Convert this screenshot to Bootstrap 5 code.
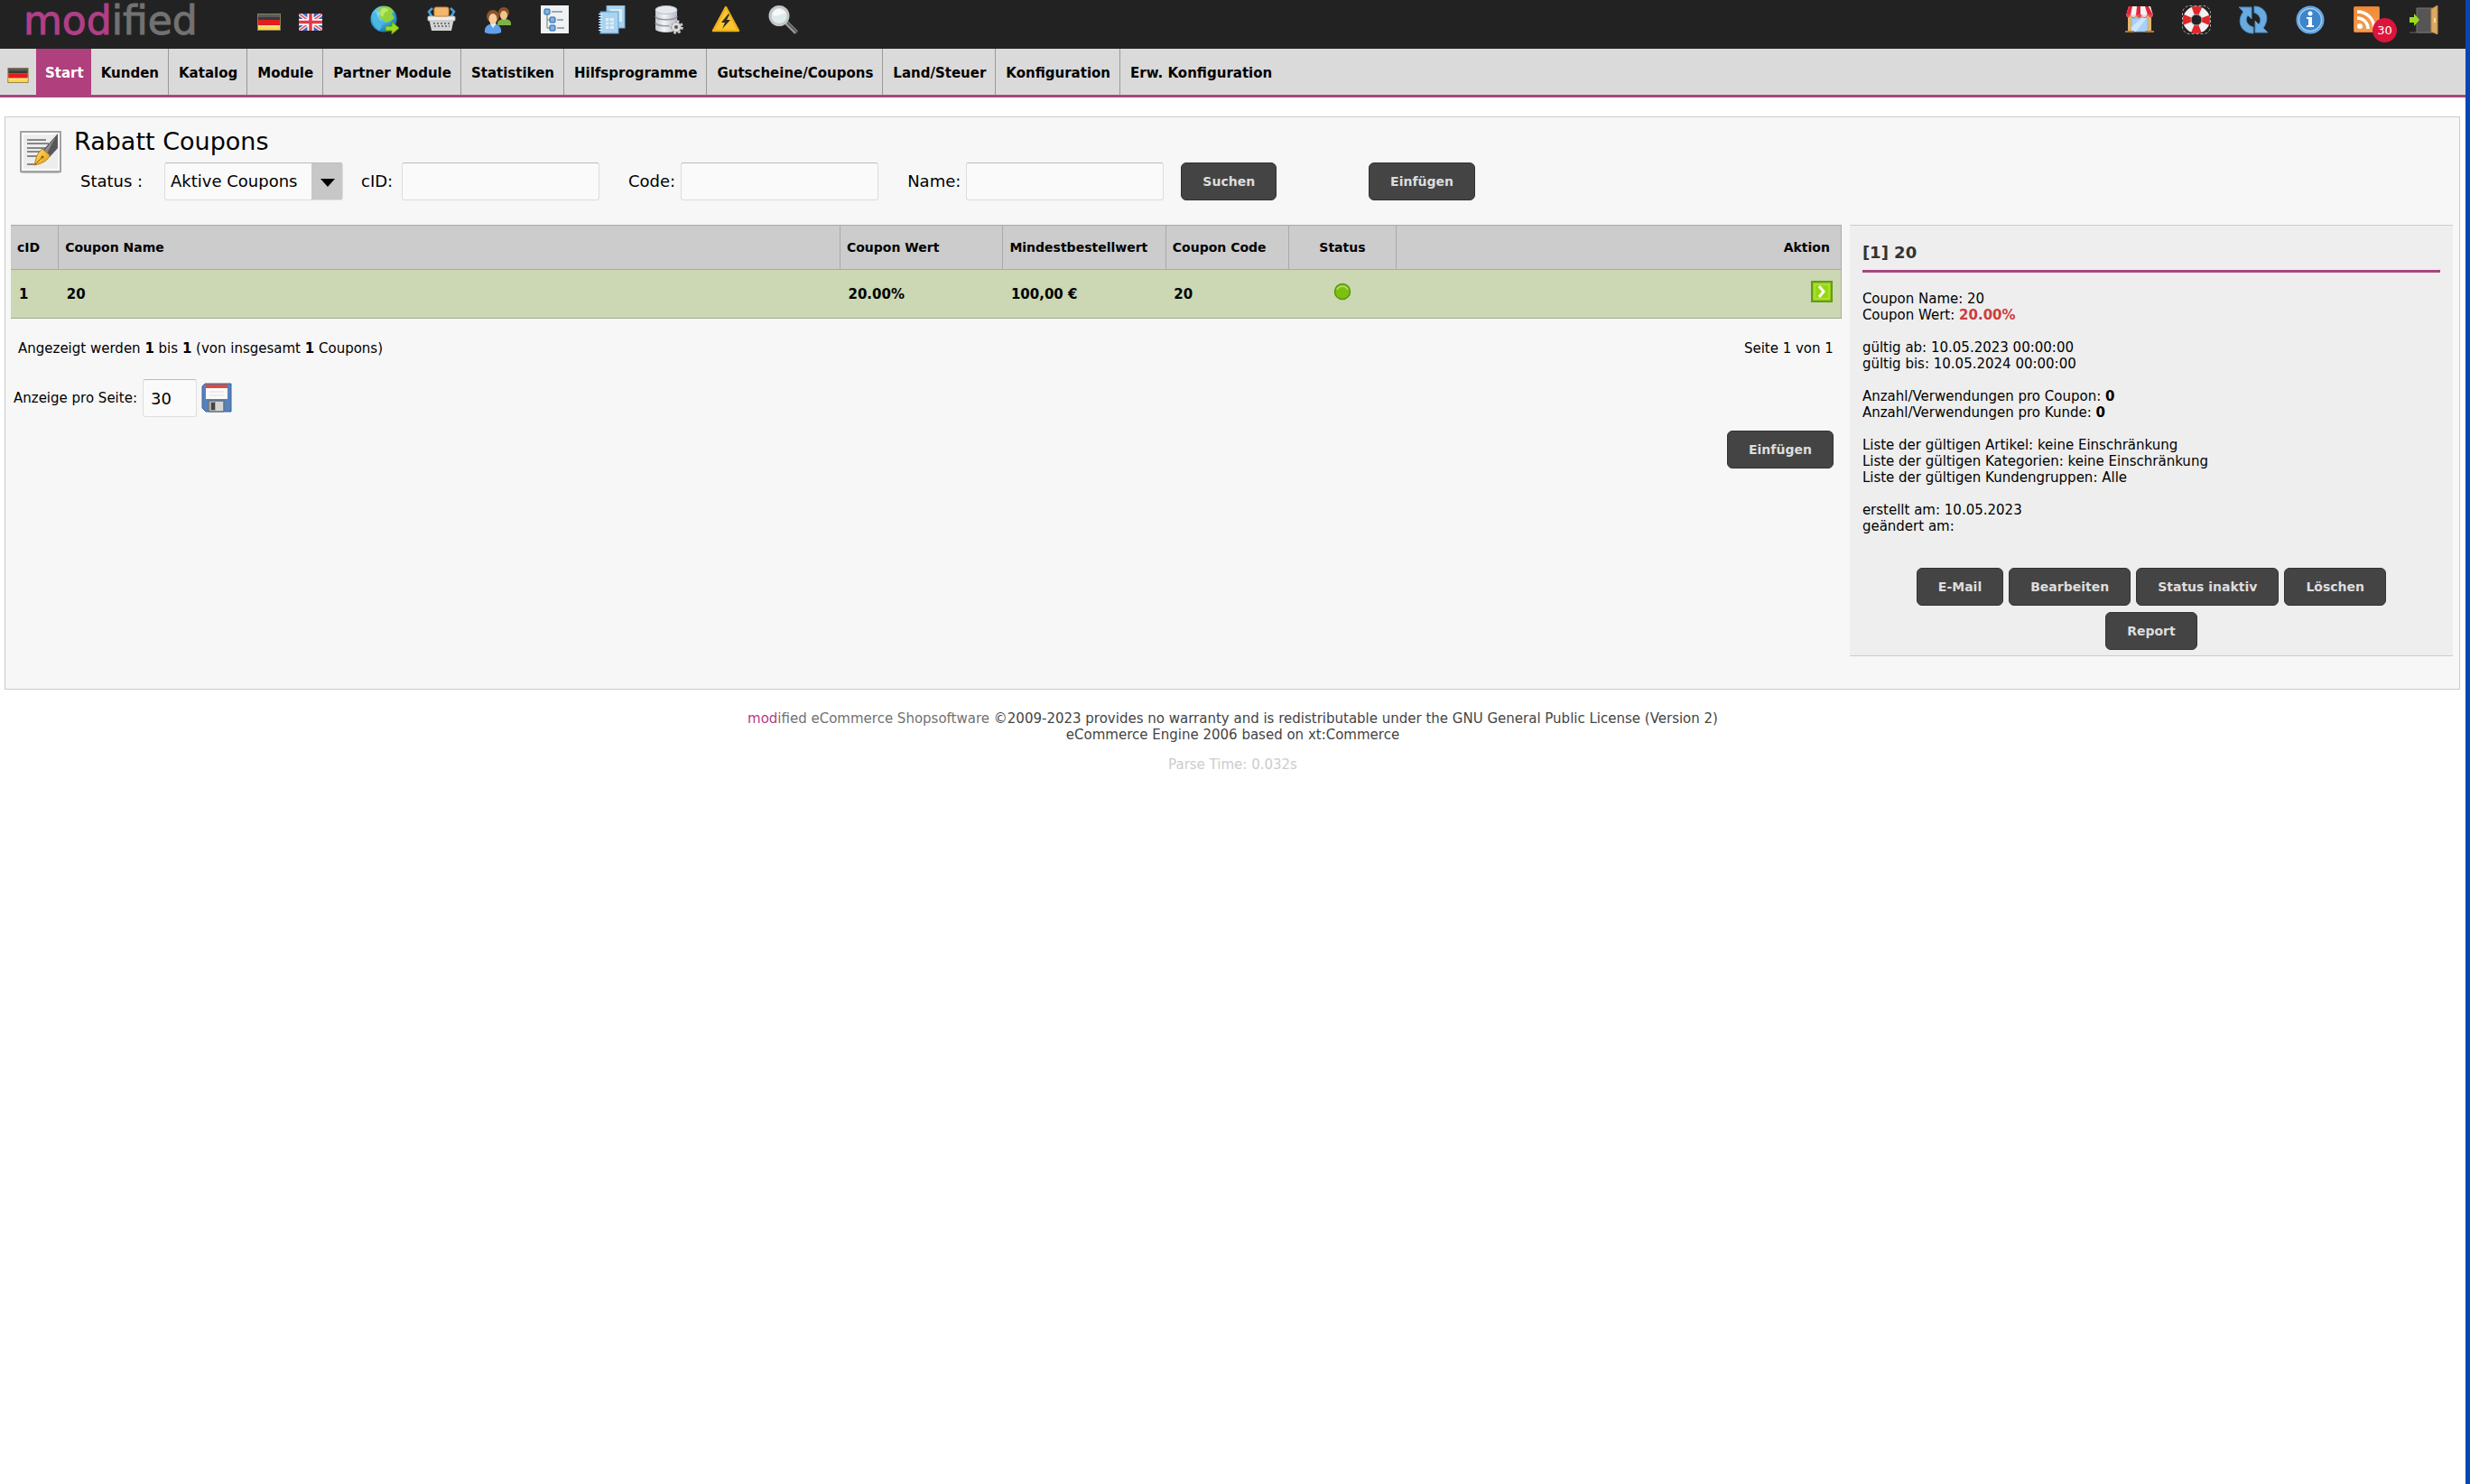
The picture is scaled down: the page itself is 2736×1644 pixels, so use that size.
<!DOCTYPE html>
<html lang="de">
<head>
<meta charset="utf-8">
<meta name="viewport" content="width=device-width, initial-scale=1">
<title>Rabatt Coupons</title>
<link href="https://cdn.jsdelivr.net/npm/bootstrap@5.3.0/dist/css/bootstrap.min.css" rel="stylesheet">
<style>
:root { --brand: #a8467f; --line: #c4c4c4; }
body { font-family: "DejaVu Sans", Verdana, sans-serif; font-size: 15px; line-height: 18px; color: #000; background: #fff; }
.shell { border-right: 5px solid #0a46b2; }
.topbar { background: #222; height: 54px; padding: 0 30px 0 26px; }
.topbar svg { display: block; }
.logo { width: 259px; font-size: 44px; line-height: 46px; color: #727272; text-decoration: none; -webkit-text-stroke: 1px currentColor; }
.logo b { color: #b03f86; font-weight: 400; }
.ico-row { gap: 31px; padding-top: 6px; }
.flags { gap: 20px; padding-top: 15px; width: 125px; }
.feed-count { position: absolute; left: 22px; top: 14px; width: 27px; height: 27px; border-radius: 50%; background: #dc143c; color: #fff; text-align: center; line-height: 27px; font-size: 13px; }
.mainmenu { background: #dadada; border-bottom: 3px solid var(--brand); min-height: 54px; }
.mainmenu .nav-link { padding: 3px 10px 0 11px; line-height: 48px; font-weight: 700; color: #000; border-right: 1px solid #999; border-radius: 0; }
.mainmenu .nav-item:last-child .nav-link { border-right: 0; }
.mainmenu .nav-link.active { background: #b03f7d; color: #fff; padding: 3px 8px 0 10px; border-right: 0; }
.menu-flag { width: 40px; padding: 21px 0 0 8px; line-height: 0; }
.panel { margin: 21px 6px 0 5px; background: #f7f7f7; border: 1px solid #ccc; padding: 0 7px 36px 6px; }
.panel-head { padding: 10px 0 27px 10px; }
.panel-icon { padding: 5px 0 0; margin-right: 14px; }
.panel-title { font-size: 27px; line-height: 34px; margin: 0 0 6px; font-weight: 400; }
.filter { padding-left: 7px; font-size: 18px; }
.filter label { padding-right: 6px; }
.l-status { width: 93px; } .l-cid { width: 45px; }
.field { height: 42px; padding: 0 8px; background-color: #fafafa; border: 1px solid #ddd; border-top-color: #bbb; border-radius: 3px; font-size: 18px; color: #000; }
.field-text { width: 219px; }
.field-select { width: 198px; padding: 0 6px; appearance: none; margin-right: 20px;
  background-image: url("data:image/svg+xml,%3Csvg xmlns='http://www.w3.org/2000/svg' width='34' height='42'%3E%3Crect width='34' height='42' fill='%23c7c7c7'/%3E%3Cpath d='M10 18h16l-8 9z'/%3E%3C/svg%3E");
  background-repeat: no-repeat; background-position: right center; }
.field-count { width: 60px; margin: 0 5px 0 6px; }
.btn-dark2 { --bs-btn-bg: #444; --bs-btn-color: #ddd; --bs-btn-border-color: #333; --bs-btn-hover-bg: #555; --bs-btn-hover-color: #fff; --bs-btn-font-weight: 700; --bs-btn-font-size: 14px; --bs-btn-line-height: 18px; --bs-btn-padding-x: 23px; --bs-btn-padding-y: 11px; --bs-btn-border-radius: 6px; }
.search-btn { margin-left: 19px; }
.insert-btn { margin-left: 102px; }
.main-col { flex: 1 1 0; min-width: 0; }
.side-col { flex: 0 0 24.7%; background: #eee; border: solid #ccc; border-width: 1px 0; margin-left: 9px; padding: 0 14px 6px 14px; }
.grid { width: 100%; table-layout: fixed; border-collapse: collapse; font-weight: 700; border-right: 1px solid #aaa; }
.grid th { background: #ccc; border: solid #aaa; border-width: 1px 1px 1px 0; height: 49px; padding: 0 7px; font-size: 14px; }
.grid td { background: #ccd7b3; border-bottom: 1px solid #a3ab93; height: 54px; padding: 0 9px; }
.grid th:last-child { padding-right: 12px; }
.grid svg { display: inline-block; vertical-align: middle; margin-bottom: 6px; }
.pager { padding: 24px 9px 25px 8px; }
.perpage { padding-left: 3px; }
.insert-row { padding: 15px 9px 0 0; }
.side-title { font-size: 18px; line-height: 22px; font-weight: 700; color: #333; padding: 19px 0 8px; margin: 0 0 20px; border-bottom: 3px solid var(--brand); }
.side-col p { margin: 0 0 18px; }
.price { color: #cd3c3c; }
.actions { gap: 7px 6px; padding: 19px 30px 0; }
.foot { color: #444; padding-top: 23px; }
.foot a { color: #727272; text-decoration: none; } .foot a span { color: #b03f86; }
.parse { color: #ccc; margin-top: 15px; }
</style>
</head>
<body>
<svg width="0" height="0" class="position-absolute" aria-hidden="true">
  <defs>
    <linearGradient id="gGrey" x1="0" y1="0" x2="1" y2="0"><stop offset="0" stop-color="#c3c8ce"/><stop offset=".4" stop-color="#f3f5f7"/><stop offset="1" stop-color="#b3b9c2"/></linearGradient>
    <radialGradient id="gGlobe" cx=".4" cy=".3" r=".8"><stop offset="0" stop-color="#9ce4fb"/><stop offset=".6" stop-color="#2ba0dc"/><stop offset="1" stop-color="#1668ac"/></radialGradient>
    <linearGradient id="gGold" x1="0" y1="0" x2="1" y2="1"><stop offset="0" stop-color="#ffdf6b"/><stop offset="1" stop-color="#e79a12"/></linearGradient>
    <linearGradient id="gOrange" x1="0" y1="0" x2="0" y2="1"><stop offset="0" stop-color="#ee8a3c"/><stop offset="1" stop-color="#f3a04f"/></linearGradient>
    <symbol id="flag-de" viewBox="0 0 26 19"><rect x=".5" y=".5" width="25" height="18" fill="#fbd64b" stroke="#8b8156"/><rect x="1" y="1" width="24" height="6" fill="#3a3a3a"/><rect x="1" y="1" width="24" height="3" fill="#5a5a5a"/><rect x="1" y="7" width="24" height="6" fill="#e01e1e"/><rect x="1" y="13" width="24" height="2" fill="#fbe27f"/></symbol>
    <symbol id="flag-uk" viewBox="0 0 26 19"><rect width="26" height="19" fill="#4560b8"/><path d="M0 0l26 19M26 0L0 19" stroke="#f4f2fb" stroke-width="4"/><path d="M0 0l26 19M26 0L0 19" stroke="#e2545c" stroke-width="1.500"/><path d="M13 0v19M0 9.500h26" stroke="#fff" stroke-width="7"/><path d="M13 0v19M0 9.500h26" stroke="#e23a44" stroke-width="3.500"/></symbol>
  </defs>
</svg>
<div class="shell min-vh-100">
  <header class="topbar d-flex align-items-start">
    <a class="logo" href="#"><b>mod</b>ified</a>
    <div class="flags d-flex">
      <a href="#" aria-label="Deutsch"><svg width="26" height="19"><use href="#flag-de"/></svg></a>
      <a href="#" aria-label="English"><svg width="26" height="19"><use href="#flag-uk"/></svg></a>
    </div>
    <div class="ico-row d-flex">
      <a href="#" aria-label="Shop-Sprachen"><svg width="32" height="32" viewBox="0 0 32 32"><circle cx="15" cy="15" r="14.500" fill="url(#gGlobe)"/><path d="M10 3c5-3 10-2 13 0l3 4-2 2 3 5-5 4-5 1-3-3-4-3 1-6-3-1z" fill="#92d13a"/><path d="M12 4c4-2 7-1 9 1l-5 3-2 5-3-3z" fill="#b9e86a"/><path d="M3 9c4-4 4 2 8 8s1 8-1 11C4 24 1 17 3 9z" fill="#4cb8e2"/><path d="M17 23h7v-5l8 7-8 7v-4h-7z" fill="#9ddb20" stroke="#5c9210"/></svg></a>
      <a href="#" aria-label="Bestellungen"><svg width="32" height="32" viewBox="0 0 32 32"><path d="M7 15L2 7l4-4M25 15l5-8-4-4" fill="none" stroke="#49a4d6" stroke-width="2.500"/><path d="M2 14h28l-3 14H5z" fill="#d3d3d3"/><rect x="1" y="12" width="30" height="5" rx="1" fill="#eee" stroke="#bbb"/><rect x="8" y="2" width="16" height="10" rx="2" fill="#f3b66a" stroke="#d28a36"/><path d="M7 20h19M8 23h17" stroke="#777" stroke-width="2" stroke-dasharray="2 2"/></svg></a>
      <a href="#" aria-label="Kunden"><svg width="32" height="32" viewBox="0 0 32 32"><path d="M15 20c0-6 15-7 15 0v2H15z" fill="#7fb045"/><circle cx="22" cy="8" r="6" fill="#8b5426"/><ellipse cx="22" cy="11" rx="4" ry="5" fill="#f0c592"/><path d="M1 30c-2-13 20-13 18 0-5 2-13 2-18 0z" fill="#5fa1ea"/><path d="M7 20l3 5 4-5z" fill="#e6f0fb"/><circle cx="10" cy="12" r="7" fill="#8b5426"/><ellipse cx="10" cy="15" rx="4.500" ry="6" fill="#f5cd9e"/></svg></a>
      <a href="#" aria-label="Kategorien"><svg width="32" height="32" viewBox="0 0 32 32"><rect x="0" y="0" width="31" height="31" fill="#eff2f4"/><path d="M7 9v16h5M7 16h5" stroke="#777" fill="none"/><g fill="#7db3e4" stroke="#2863a6"><rect x="4" y="4" width="6" height="6" rx="1"/><rect x="10" y="13" width="6" height="6" rx="1"/><rect x="10" y="22" width="6" height="6" rx="1"/></g><path d="M12 7h12M18 16h7M18 25h8" stroke="#8b8f93" stroke-width="1.500"/></svg></a>
      <a href="#" aria-label="Content"><svg width="32" height="32" viewBox="0 0 32 32"><rect x="10" y="0" width="20" height="25" fill="#a9d3ef" stroke="#6ea9d0"/><rect x="14" y="4" width="13" height="14" fill="#d8ecf8"/><rect x="3" y="7" width="20" height="24" fill="#a9d3f1" stroke="#5f9bc8"/><path d="M3 9v21" stroke="#e7f3fb" stroke-width="4" stroke-dasharray="1 2"/><rect x="9" y="14" width="9" height="12" fill="#dceefa"/><path d="M9 18h9M9 22h9M13 14v12" stroke="#9cc9e6"/></svg></a>
      <a href="#" aria-label="Datenbank"><svg width="32" height="32" viewBox="0 0 32 32"><path d="M1 5v21c0 5 24 5 24 0V5z" fill="url(#gGrey)"/><ellipse cx="13" cy="5" rx="12" ry="4.500" fill="#e6e9ec" stroke="#b8bdc4"/><path d="M1 12c0 5 24 5 24 0M1 19c0 5 24 5 24 0" fill="none" stroke="#9299a3" stroke-width="1.500"/><circle cx="24" cy="24" r="5.500" fill="#ddd" stroke="#8a8a8a" stroke-width="1"/><circle cx="24" cy="24" r="6.500" fill="none" stroke="#d0d0d0" stroke-width="2.500" stroke-dasharray="2.600 2.500"/><circle cx="24" cy="24" r="2" fill="#555"/></svg></a>
      <a href="#" aria-label="Log"><svg width="32" height="32" viewBox="0 0 32 32"><path d="M16 2l14 26H2z" fill="#fbc62f" stroke="#eeb01d" stroke-width="2.500" stroke-linejoin="round"/><path d="M19 9l-8 10h4l-3 7 9-10h-4l3-6z" fill="#2c2a25"/></svg></a>
      <a href="#" aria-label="Suche"><svg width="34" height="32" viewBox="0 0 34 32"><path d="M20 19l11 11" stroke="#9a9a9a" stroke-width="5"/><path d="M21 19l11 11" stroke="#5c5c5c" stroke-width="2"/><circle cx="12" cy="11.500" r="10" fill="#dfeaec" stroke="#c2c6c7" stroke-width="3"/><path d="M5 11c0-9 13-8 14-2-5 0-8 4-14 2z" fill="#f7fafa"/></svg></a>
    </div>
    <div class="ico-row d-flex ms-auto">
      <a href="#" aria-label="Zum Shop"><svg width="32" height="32" viewBox="0 0 32 32"><path d="M3 10h26v19H3z" fill="#e8b566"/><rect x="7" y="14" width="18" height="15" fill="#a8d0f6" stroke="#8eb4d8"/><path d="M7 24L18 14h6L12 29H7z" fill="#cbe5fb"/><path d="M4 1h24l3 10H1z" fill="#f4f4f4"/><path d="M4 1h4l-2 10H1zM13 1h4v10h-5zM22 1h4l5 10h-6z" fill="#e2263a"/><path d="M1 10h30c0 5-5 4-6 0-1 5-6 5-6 0-1 5-6 5-7 0 0 5-5 5-6 0-1 5-5 4-5 0z" fill="#e8485a"/><path d="M6 10h6c0 4-5 4-6 0zM18 10h6c0 4-5 4-6 0z" fill="#f3dada"/><path d="M0 29h10M22 29h10" stroke="#b4782c" stroke-width="2"/></svg></a>
      <a href="#" aria-label="Hilfe"><svg width="32" height="32" viewBox="0 0 32 32"><rect x=".5" y=".5" width="31" height="31" rx="8" fill="none" stroke="#aaa" stroke-dasharray="3 2"/><circle cx="16" cy="16" r="10.500" fill="none" stroke="#f2f2f2" stroke-width="9"/><circle cx="16" cy="16" r="10.500" fill="none" stroke="#e3262a" stroke-width="9" stroke-dasharray="8.200 8.290" stroke-dashoffset="4.100"/><circle cx="16" cy="16" r="6" fill="#222" stroke="#a4a4a4"/></svg></a>
      <a href="#" aria-label="Cache leeren"><svg width="32" height="32" viewBox="0 0 32 32"><path d="M0 2h14v13l-4-4c-4 5-1 11 6 13v7C2 31-3 17 5 7z" fill="#69abe0" stroke="#4a8cc4"/><path d="M32 30H18V17l4 4c4-5 1-11-5-13V1c13 0 18 13 10 24z" fill="#69abe0" stroke="#4a8cc4"/></svg></a>
      <a href="#" aria-label="Info"><svg width="32" height="32" viewBox="0 0 32 32"><circle cx="16" cy="16" r="14.500" fill="#3d86cc" stroke="#69a9e2" stroke-width="2"/><circle cx="16" cy="16" r="12.500" fill="none" stroke="#a5cff0" stroke-width="1.500"/><circle cx="16" cy="9" r="2.500" fill="#fff"/><path d="M12 13h6v9h2v2h-8v-2h2v-7h-2z" fill="#fff"/></svg></a>
      <a href="#" class="position-relative text-decoration-none" aria-label="News"><svg width="32" height="32" viewBox="0 0 32 32"><rect x="1.500" y="1.500" width="28" height="28" rx="1" fill="url(#gOrange)" stroke="#e2792e"/><circle cx="8" cy="23" r="3" fill="#fff"/><path d="M5 14c7 0 12 5 12 12M5 7c11 0 19 8 19 19" fill="none" stroke="#fff" stroke-width="3.500"/></svg><span class="feed-count">30</span></a>
      <a href="#" aria-label="Abmelden"><svg width="32" height="32" viewBox="0 0 32 32"><path d="M8 3h17v27H8z" fill="#555" stroke="#7a776c"/><path d="M0 30h26" stroke="#666"/><path d="M24 4l7-4v32l-7-3z" fill="#dca865" stroke="#b98747"/><path d="M28 14v5" stroke="#fff1b8" stroke-width="1.500"/><path d="M0 13h5V9l6 7-6 7v-4H0z" fill="#9bdc1f"/></svg></a>
    </div>
  </header>
  <nav class="mainmenu d-flex">
    <a href="#" class="menu-flag" aria-label="Sprache"><svg width="24" height="17"><use href="#flag-de"/></svg></a>
    <ul class="nav">
      <li class="nav-item"><a class="nav-link active" href="#">Start</a></li>
      <li class="nav-item"><a class="nav-link" href="#">Kunden</a></li>
      <li class="nav-item"><a class="nav-link" href="#">Katalog</a></li>
      <li class="nav-item"><a class="nav-link" href="#">Module</a></li>
      <li class="nav-item"><a class="nav-link" href="#">Partner Module</a></li>
      <li class="nav-item"><a class="nav-link" href="#">Statistiken</a></li>
      <li class="nav-item"><a class="nav-link" href="#">Hilfsprogramme</a></li>
      <li class="nav-item"><a class="nav-link" href="#">Gutscheine/Coupons</a></li>
      <li class="nav-item"><a class="nav-link" href="#">Land/Steuer</a></li>
      <li class="nav-item"><a class="nav-link" href="#">Konfiguration</a></li>
      <li class="nav-item"><a class="nav-link" href="#">Erw. Konfiguration</a></li>
    </ul>
  </nav>
  <main class="panel">
    <div class="panel-head d-flex align-items-start">
      <div class="panel-icon"><svg class="d-block" width="46" height="48" viewBox="0 0 46 48"><rect x="1" y="3" width="44" height="44" rx="2" fill="#bbb"/><rect x="1" y="1" width="44" height="44" fill="#fff" stroke="#a3a3a3" stroke-width="2"/><rect x="4" y="4" width="38" height="38" fill="#ededed"/><path d="M8 10h21M8 14h24M8 19h20M8 23h15M8 28h11M8 37h11" stroke="#666" stroke-width="1.500"/><path d="M42 3v16L33 29l-8-7z" fill="#58585b"/><path d="M40 6L27 22l3 3z" fill="#8b8b8e"/><path d="M25 20l8 7c-2 6-7 8-13 10l-4 1c2-5 1-12 9-18z" fill="url(#gGold)" stroke="#b97c14"/><path d="M17 37l8-8" stroke="#8d5c0e"/><circle cx="25" cy="29" r="1.500" fill="#8d5c0e"/></svg></div>
      <div>
        <h1 class="panel-title">Rabatt Coupons</h1>
        <form class="filter d-flex align-items-center flex-wrap" onsubmit="return false">
          <label class="l-status" for="fStatus">Status :</label>
          <select class="field field-select" id="fStatus"><option>Aktive Coupons</option></select>
          <label class="l-cid" for="fCid">cID:</label>
          <input class="field field-text" id="fCid" type="text">
          <label class="ms-4 ps-2" for="fCode">Code:</label>
          <input class="field field-text" id="fCode" type="text">
          <label class="ms-4 ps-2" for="fName">Name:</label>
          <input class="field field-text" id="fName" type="text">
          <button class="btn btn-dark2 search-btn" type="submit">Suchen</button>
          <button class="btn btn-dark2 insert-btn" type="button">Einfügen</button>
        </form>
      </div>
    </div>
    <div class="d-flex align-items-start">
      <section class="main-col">
        <table class="grid">
          <colgroup><col style="width:2.6%"><col><col style="width:8.9%"><col style="width:8.9%"><col style="width:6.7%"><col style="width:5.9%"><col style="width:24.3%"></colgroup>
          <thead><tr><th>cID</th><th>Coupon Name</th><th>Coupon Wert</th><th>Mindestbestellwert</th><th>Coupon Code</th><th class="text-center">Status</th><th class="text-end">Aktion</th></tr></thead>
          <tbody><tr><td>1</td><td>20</td><td>20.00%</td><td>100,00 €</td><td>20</td>
            <td class="text-center"><svg width="20" height="20" viewBox="0 0 20 20"><circle cx="10" cy="10" r="8.500" fill="#7cc110" stroke="#5c9414" stroke-width="1.500"/><path d="M4 8c2-5 10-5 12 0" fill="none" stroke="#b4e070" stroke-width="1.500"/></svg></td>
            <td class="text-end"><a href="#" aria-label="Auswählen"><svg width="24" height="24" viewBox="0 0 24 24"><rect x="1" y="1" width="22" height="22" fill="#8fcf10" stroke="#669a16" stroke-width="2"/><rect x="4" y="4" width="16" height="16" fill="#96d80c" stroke="#c0ea5c"/><path d="M9 6l5 6-5 6" fill="none" stroke="#fff" stroke-width="3"/></svg></a></td></tr></tbody>
        </table>
        <div class="pager d-flex justify-content-between"><span>Angezeigt werden <b>1</b> bis <b>1</b> (von insgesamt <b>1</b> Coupons)</span><span>Seite 1 von 1</span></div>
        <form class="perpage d-flex align-items-center" onsubmit="return false">
          <label for="perPage">Anzeige pro Seite:</label>
          <input class="field field-count" id="perPage" type="text" value="30">
          <button class="btn p-0 border-0" type="submit" aria-label="Speichern"><svg class="d-block" width="34" height="34" viewBox="0 0 34 34"><path d="M4 1h29v31H5l-4-4V4z" fill="#5582bd" stroke="#3d659c"/><rect x="5" y="3" width="24" height="15" fill="#fafafa"/><rect x="5" y="2" width="24" height="4" fill="#e04a38"/><path d="M9 10h16M9 14h16" stroke="#ddd"/><path d="M8 20h17v12H8z" fill="#aaa" stroke="#666"/><path d="M16 21h8v10h-8z" fill="#d5d5d5"/><rect x="11" y="22" width="4" height="8" fill="#444"/></svg></button>
        </form>
        <div class="insert-row text-end"><button class="btn btn-dark2" type="button">Einfügen</button></div>
      </section>
      <aside class="side-col">
        <h2 class="side-title">[1] 20</h2>
        <p>Coupon Name: 20<br>Coupon Wert: <b class="price">20.00%</b></p>
        <p>gültig ab: 10.05.2023 00:00:00<br>gültig bis: 10.05.2024 00:00:00</p>
        <p>Anzahl/Verwendungen pro Coupon: <b>0</b><br>Anzahl/Verwendungen pro Kunde: <b>0</b></p>
        <p>Liste der gültigen Artikel: keine Einschränkung<br>Liste der gültigen Kategorien: keine Einschränkung<br>Liste der gültigen Kundengruppen: Alle</p>
        <p>erstellt am: 10.05.2023<br>geändert am:</p>
        <div class="actions d-flex flex-wrap justify-content-center">
          <button class="btn btn-dark2" type="button">E-Mail</button>
          <button class="btn btn-dark2" type="button">Bearbeiten</button>
          <button class="btn btn-dark2" type="button">Status inaktiv</button>
          <button class="btn btn-dark2" type="button">Löschen</button>
          <button class="btn btn-dark2" type="button">Report</button>
        </div>
      </aside>
    </div>
  </main>
  <footer class="foot text-center">
    <div><a href="#"><span>mod</span>ified eCommerce Shopsoftware</a> ©2009-2023 provides no warranty and is redistributable under the GNU General Public License (Version 2)</div>
    <div>eCommerce Engine 2006 based on xt:Commerce</div>
    <div class="parse">Parse Time: 0.032s</div>
  </footer>
</div>
<script src="https://cdn.jsdelivr.net/npm/bootstrap@5.3.0/dist/js/bootstrap.bundle.min.js"></script>
</body>
</html>
